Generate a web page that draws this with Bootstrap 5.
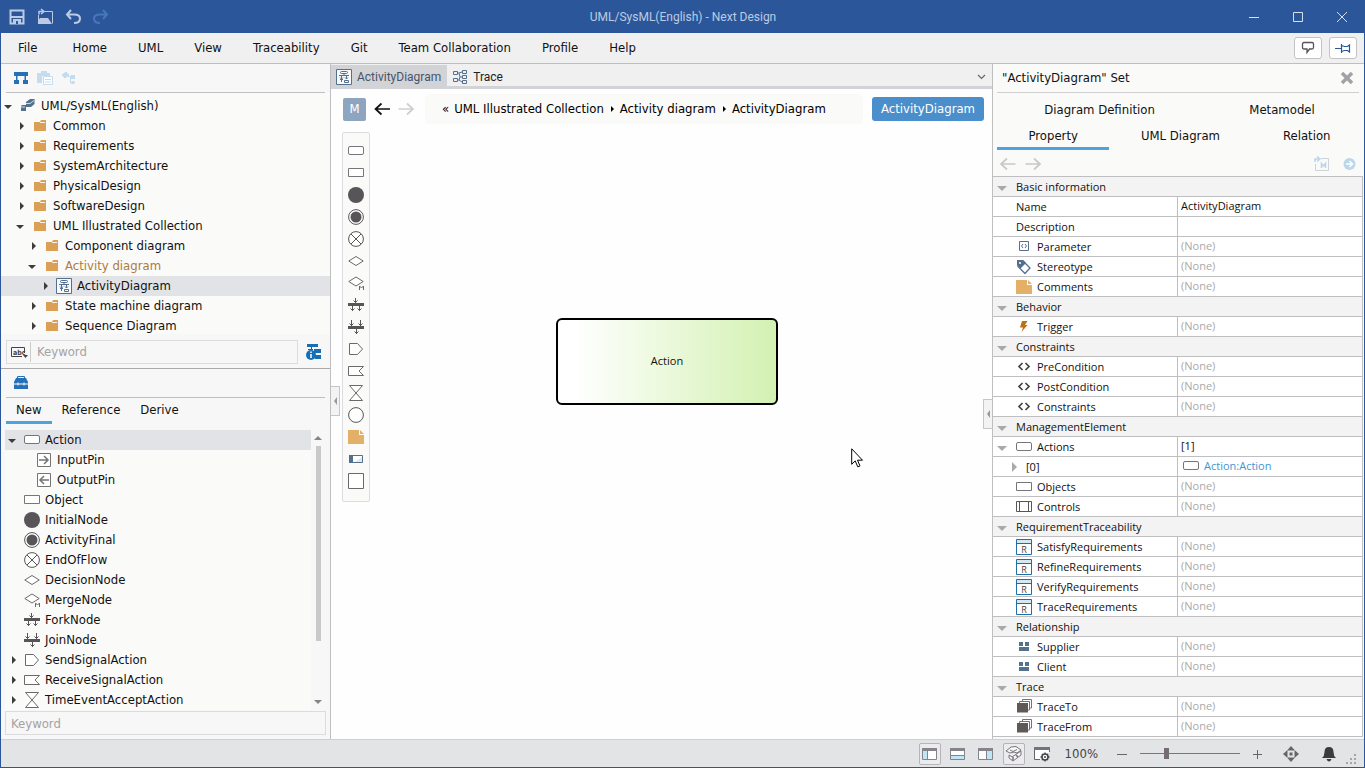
<!DOCTYPE html>
<html lang="en">
<head>
<meta charset="utf-8">
<meta name="viewport" content="width=device-width, initial-scale=1">
<title>UML/SysML(English) - Next Design</title>
<link href="https://cdn.jsdelivr.net/npm/bootstrap@5.3.0/dist/css/bootstrap.min.css" rel="stylesheet">
<style>
:root{--brand:#2b579a;--line:#bfbfc1;--sel:#e2e3e6;--paper:#fafaf8;--accent:#4fa3dc;--ink:#575557}
body{font:13px/20px "DejaVu Sans Condensed","DejaVu Sans",sans-serif;color:#111;background:#fefefe}
.app{height:100vh;border:1px solid var(--brand);border-top:0}
.app main{min-height:0}
svg{display:block;flex:none}
button,.crumb-link{font:inherit;color:inherit;background:none;border:0;padding:0;text-decoration:none}
input{font:inherit}
.titlebar{background:var(--brand);height:33px;color:#bccbe3;padding:0 14px 0 7px}
.titlebar .caption-text{font:12px/20px Roboto,sans-serif;padding-left:8px}
.titlebar .side{flex:1 1 0}
.quick{gap:10px}
.window-btns{gap:28px}
.menubar{background:#f0f0f0;height:31px;border-bottom:1px solid var(--line);padding:0 7px 0 17px}
.menus{gap:31px}
.menus button:first-child{margin-right:4px}
.chips{gap:7px}
.chip{width:28px;height:22px;border:1px solid #c3c3c5;border-radius:3px;background:#fff}
.left-pane{width:330px;border-right:1px solid var(--line);background:#f7f7f7}
.tool-row{height:29px;margin:0 5px;border-bottom:1px solid var(--line);padding-left:7px;gap:8px}
.tree{list-style:none;margin:0;padding:0;background:var(--paper)}
.model-tree{padding-top:3px}
.tree li{display:flex;align-items:center;height:20px;gap:5px;white-space:nowrap}
.tree li>.arrow{margin-right:-2px;width:16px}
.l1{padding-left:12px}.l2{padding-left:24px}.l3{padding-left:36px}
.tree .open-path{color:#b07a3c}
.tree .picked{background:var(--sel)}
.find-row{height:34px;padding:6px 8px 4px 5px;gap:7px}
.find-box{border:1px solid #dcdcde;background:#f7f7f7;height:24px}
.find-box input,input.find-box{min-width:0;border-radius:0;outline:0}
.find-box input{border:0;border-left:1px solid #ccc;background:none;padding:0 6px}
input.find-box{padding:0 5px;margin:0 4px 4px}
input::placeholder{color:#a3a3a3}
.lower{border-top:1px solid #a9a9ab;background:#f7f7f7}
.new-tabs{padding:0 5px;height:26px}
.new-tabs button{padding:0 10px;border-bottom:3px solid transparent}
.new-tabs .active,.prop-tabs .active{border-bottom-color:var(--accent)}
.new-list{margin:6px 5px 1px 4px}
.scroller{width:14px;background:#f7f7f7}
.scroller .bar{width:5px;background:#c9c9c9;flex:0 1 195px}
.center-pane{min-width:0;background:#fefefe}
.doc-tabs{height:25px;padding-top:1px;background:#f0f0f0;border-bottom:3px solid #d2d3d7}
.doc-tabs button{gap:5px;padding:2px 6px 0 5px;font:12px/16px Roboto,sans-serif;color:#222}
.doc-tabs .active{background:#d2d3d7;color:#48536a}
.crumb-row{padding:5px 8px 0 12px;height:35px}
.model-btn{width:23px;height:23px;background:#8ea5c0;color:#fff;border-radius:2px}
.go-back{color:#111}
.go-fwd{color:#cfcfcf}
.crumbs{background:var(--paper);border-radius:4px;height:30px;margin:0 9px 0 10px;padding-left:17px;color:#000;gap:5px}
.type-btn{height:24px;background:#4a8fcc;color:#fff;border-radius:3px;padding:0 9px}
.canvas{position:relative}
.palette{width:28px;border:1px solid #dcdce0;border-radius:2px;background:var(--paper);margin:8px 0 0 11px;padding:7px 0 9px}
.palette button{height:22px;display:flex;align-items:center}
.node-action{position:absolute;left:225px;top:194px;width:222px;height:87px;border:2px solid #000;border-radius:6px;background:linear-gradient(90deg,#fff 8%,#d3f1b2);font:11px/16px "Open Sans",sans-serif;padding-bottom:2px}
.pointer{position:absolute;left:520px;top:324px}
.grip{position:absolute;width:9px;height:30px;background:#f3f3f3;border:1px solid #c6c6c8;padding-left:1px}
.grip-l{left:0;top:262px;border-left:0}
.grip-r{right:0;top:275px;border-right:0}
.right-pane{width:372px;border-left:1px solid var(--line);background:var(--paper)}
.pane-head{height:29px;margin:0 5px 0 4px;border-bottom:1px solid #cfcfd1;padding:0 5px}
.prop-tabs{margin:0 2px 0 4px;padding-top:5px}
.prop-tabs button{flex:1 1 auto;height:26px;border-bottom:3px solid transparent}
.nav-row{height:26px;padding:2px 8px 0 6px;gap:9px;color:#c9c9cb}
.props{width:370px;font:11px/17px "Open Sans","Noto Sans",sans-serif;border-collapse:separate;border-spacing:0;table-layout:fixed;border-top:1px solid var(--line);border-right:1px solid var(--line);background:#fff}
.props .name-col{width:184px}
.props th,.props td{height:20px;padding:0;border-bottom:1px solid var(--line);font-weight:400;white-space:nowrap}
.props .cell{display:flex;align-items:center;height:19px;gap:5px;padding-left:23px}
.props .group th{background:#f3f3f3}
.props .group .cell,.props .opened .cell{padding-left:2px}
.props .item .cell{padding-left:18px}
.props td{border-left:1px solid var(--line);padding:0 0 2px 3px;color:#a9a9a9}
.props td.val{color:#111}
.props a{color:#3f95d2;text-decoration:none}
.ref-link{gap:5px;padding-left:2px}
.status{height:28px;background:#e3e4e6;border-top:1px solid #d0d0d3}
.status .tool{width:22px;height:22px;margin:0 3px;border:1px solid transparent;border-radius:2px}
.status .on{border-color:#b7b3b9;background:#ececee}
.zoom-value{margin:0 16px 0 9px;color:#444}
.zoom-range{appearance:none;width:100px;height:14px;margin:0 10px;background:linear-gradient(#7b757b,#7b757b) center/100% 1px no-repeat}
.zoom-range::-webkit-slider-thumb{appearance:none;width:5px;height:11px;background:#756d73}
.fit-btn{margin:0 22px 0 17px}
.bell-btn{margin-right:9px}
</style>
</head>
<body>
<svg width="0" height="0" class="position-absolute" aria-hidden="true">
<defs>
<symbol id="right" viewBox="0 0 16 16"><path d="M7 4v8l4-4z" fill="#3c3c3c"/></symbol>
<symbol id="down" viewBox="0 0 16 16"><path d="M3 7h8l-4 4z" fill="#3c3c3c"/></symbol>
<symbol id="gdown" viewBox="0 0 16 16"><path d="M2 7h10l-5 5z" fill="#a9a9ab"/></symbol>
<symbol id="folder" viewBox="0 0 16 16"><path d="M2 4h6l1-2h5v11H2z" fill="#dba056"/><path d="M8 4.500h5" stroke="#fff3df"/></symbol>
<symbol id="action" viewBox="0 0 16 16"><rect x=".5" y="3.500" width="15" height="8" rx="1.500" fill="#fff" stroke="#77757a"/></symbol>
<symbol id="object" viewBox="0 0 16 16"><path d="M.5 3.500h15v8H.5z" fill="#fff" stroke="#77757a"/></symbol>
<symbol id="inpin" viewBox="0 0 16 16"><path d="M1.500 1.500h13v13h-13z" fill="#fff" stroke="#757375"/><path d="M3 8h9M8 4l4 4-4 4" fill="none" stroke="#757375" stroke-width="1.500"/></symbol>
<symbol id="outpin" viewBox="0 0 16 16"><path d="M1.500 1.500h13v13h-13z" fill="#fff" stroke="#757375"/><path d="M13 8H4M8 4L4 8l4 4" fill="none" stroke="#757375" stroke-width="1.500"/></symbol>
<symbol id="initial" viewBox="0 0 16 16"><circle cx="8" cy="8" r="8" fill="#575557"/></symbol>
<symbol id="final" viewBox="0 0 16 16"><circle cx="8" cy="8" r="7.400" fill="#fff" stroke="#575557"/><circle cx="8" cy="8" r="5.500" fill="#575557"/></symbol>
<symbol id="endflow" viewBox="0 0 16 16"><circle cx="8" cy="8" r="7.400" fill="#fff" stroke="#575557"/><path d="M3 3l10 10M13 3L3 13" stroke="#575557"/></symbol>
<symbol id="decision" viewBox="0 0 16 16"><path d="M.8 8L8 3.500 15.200 8 8 12.500z" fill="#fff" stroke="#6b696b"/></symbol>
<symbol id="merge" viewBox="0 0 16 16"><path d="M.8 6.500L8 2l7.200 4.500L8 11z" fill="#fff" stroke="#6b696b"/><path d="M11.500 15v-4l2 2 2-2v4" fill="none" stroke="#6b696b"/></symbol>
<symbol id="fork" viewBox="0 0 16 16"><path d="M0 6h16v3H0z" fill="#575557"/><path d="M7.500 1v5M5.500 3.500l2 2 2-2M4.500 9v5M2.500 11.500l2 2 2-2M11.500 9v5M9.500 11.500l2 2 2-2" fill="none" stroke="#575557"/></symbol>
<symbol id="join" viewBox="0 0 16 16"><path d="M0 7h16v3H0z" fill="#575557"/><path d="M3.500 1v6M1.500 4.500l2 2 2-2M12.500 1v6M10.500 4.500l2 2 2-2M8.500 10v5M6.500 12.500l2 2 2-2" fill="none" stroke="#575557"/></symbol>
<symbol id="send" viewBox="0 0 16 16"><path d="M1.500 2.500h8l5 5.500-5 5.500h-8z" fill="#fff" stroke="#6b696b"/></symbol>
<symbol id="receive" viewBox="0 0 16 16"><path d="M.5 3.500h15L11 8l4.500 4.500H.5z" fill="#fff" stroke="#6b696b"/></symbol>
<symbol id="time" viewBox="0 0 16 16"><path d="M1.500 .5h13L1.500 15.500h13z" fill="#fff" stroke="#6b696b"/></symbol>
<symbol id="ring" viewBox="0 0 16 16"><circle cx="8" cy="8" r="7.400" fill="#fff" stroke="#575557"/></symbol>
<symbol id="note" viewBox="0 0 16 16"><path d="M0 1h11v5h5v9H0z" fill="#e4b067"/><path d="M12 1l4 4h-4z" fill="#e4b067"/></symbol>
<symbol id="part" viewBox="0 0 16 16"><path d="M1.500 4.500h13v7h-13z" fill="#fff" stroke="#54708f"/><path d="M1 4h4v8H1z" fill="#54708f"/><path d="M7 11l7-5v5z" fill="#e3e6ea"/></symbol>
<symbol id="square" viewBox="0 0 16 16"><path d="M.5 .5h15v15H.5z" fill="#fff" stroke="#6b696b"/></symbol>
<symbol id="control" viewBox="0 0 16 16"><path d="M.5 2.500h15v10H.5zM3.500 2v10M12.500 2v10" fill="#fff" stroke="#575557"/></symbol>
<symbol id="diagram" viewBox="0 0 16 16"><g fill="none" stroke="#54708f"><path d="M.5 .5h15v15H.5z" fill="#f7f8fa"/><rect x="4.500" y="2.500" width="7" height="2" rx="1"/><path d="M8 4.500v2M3 6.500h10M5.500 7v6M4 10.500h3M4 8.500l1.500 1.500L7 8.500M10.500 7v3M9 8.500l1.500 1.500L12 8.500M8.500 11.500h4v2h-4z"/></g></symbol>
<symbol id="trace" viewBox="0 0 16 16"><g fill="none" stroke="#54708f"><path d="M1.500 2.500h4v3h-4zM1.500 9.500h4v3h-4zM10.500 1.500h4v3h-4zM10.500 6.500h4v3h-4zM10.500 11.500h4v3h-4zM6 4h1l1 4-1 3H6M8 8h2M7 4l3-1M7 11l3 2"/></g></symbol>
<symbol id="param" viewBox="0 0 16 16"><path d="M3.500 2.500h9v9h-9z" fill="#fff" stroke="#54708f"/><path d="M7 5L5.500 7 7 9M9 5l1.500 2L9 9" fill="none" stroke="#54708f"/></symbol>
<symbol id="tag" viewBox="0 0 16 16"><path d="M2 2h5l7 7-5 5.500-7-7z" fill="#fff" stroke="#54708f" stroke-width="1.300"/><path d="M1 1h6l3 3-5.500 5.500L1 6z" fill="#54708f"/><circle cx="4" cy="4" r="1" fill="#fff"/></symbol>
<symbol id="bolt" viewBox="0 0 16 16"><path d="M6 2h5.500L9 6h2.500L5.500 13 7 8.500H4z" fill="#bf7014"/></symbol>
<symbol id="angle" viewBox="0 0 16 16"><path d="M6.500 4L3 7.500 6.500 11M9.500 4L13 7.500 9.500 11" fill="none" stroke="#444" stroke-width="1.700"/></symbol>
<symbol id="req" viewBox="0 0 16 16"><path d="M.5 .5h15v15H.5z" fill="#fff" stroke="#1d6fa5"/><path d="M1 1h14v3H1z" fill="#d4e9f2"/><path d="M1 4.500h14" stroke="#1d6fa5"/><text x="8" y="13.500" font-size="9" text-anchor="middle" fill="#444">R</text></symbol>
<symbol id="rel" viewBox="0 0 16 16"><path d="M3 3h4v4H3zM9 3h4v4H9zM3 8h10v4H3z" fill="#54708f"/></symbol>
<symbol id="stack" viewBox="0 0 16 16"><path d="M3.500 4V2.500h10V11H12M6.500 2V.5h9V9H14" fill="none" stroke="#77716f"/><path d="M1 4h11v9.500H1z" fill="#5f5957"/></symbol>
<symbol id="back" viewBox="0 0 16 16"><path d="M16 8H1M7.500 2.500L1.500 8l6 5.500" fill="none" stroke="currentColor" stroke-width="1.700"/></symbol>
<symbol id="fwd" viewBox="0 0 16 16"><path d="M0 8h15M8.500 2.500l6 5.500-6 5.500" fill="none" stroke="currentColor" stroke-width="1.700"/></symbol>
</defs>
</svg>

<div class="app d-flex flex-column overflow-hidden">
<header class="titlebar d-flex align-items-center flex-shrink-0">
  <div class="side quick d-flex align-items-center">
    <button aria-label="Save"><svg width="18" height="18" viewBox="0 0 18 18"><path d="M2.500 2.500h13v13h-13z" fill="none" stroke="#bccbe3" stroke-width="2"/><path d="M2 8h14v2H2zM5 11h8v5H5z" fill="#bccbe3"/><path d="M8 13h2v3H8z" fill="#2b579a"/></svg></button>
    <button aria-label="Open"><svg width="18" height="18" viewBox="0 0 18 18"><path d="M8 3.500h8.500v12M2.500 15V7" fill="none" stroke="#bccbe3"/><path d="M2 16v-3l2-3h8l4 6z" fill="#bccbe3"/><path d="M3 6.500V3.500h4M5 1l3 2.500L5 6" fill="none" stroke="#bccbe3" stroke-width="1.500"/></svg></button>
    <button aria-label="Undo"><svg width="18" height="18" viewBox="0 0 18 18"><path d="M7 2L3 6.500 7 11M3 6.500h7c4 0 6 1.500 6 4 0 3-2 4.500-6 4.500" fill="none" stroke="#bccbe3" stroke-width="2"/></svg></button>
    <button aria-label="Redo"><svg width="18" height="18" viewBox="0 0 18 18"><path d="M11 2l4 4.500-4 4.500M15 6.500H8c-4 0-6 1.500-6 4C2 13.500 4 15 8 15" fill="none" stroke="#4677b9" stroke-width="2"/></svg></button>
  </div>
  <div class="caption-text">UML/SysML(English) - Next Design</div>
  <div class="side window-btns d-flex justify-content-end align-items-center">
    <button aria-label="Minimize"><svg width="16" height="16"><path d="M3 8.500h10" stroke="#d7e0ee"/></svg></button>
    <button aria-label="Maximize"><svg width="16" height="16"><path d="M3.500 3.500h9v9h-9z" fill="none" stroke="#d7e0ee"/></svg></button>
    <button aria-label="Close"><svg width="16" height="16"><path d="M3 3l10 10M13 3L3 13" stroke="#d7e0ee"/></svg></button>
  </div>
</header>
<nav class="menubar d-flex align-items-center justify-content-between flex-shrink-0">
  <div class="menus d-flex"><button>File</button><button>Home</button><button>UML</button><button>View</button><button>Traceability</button><button>Git</button><button>Team Collaboration</button><button>Profile</button><button>Help</button></div>
  <div class="chips d-flex">
    <button class="chip d-flex align-items-center justify-content-center" aria-label="Feedback"><svg width="16" height="16" fill="none" stroke="#575557" stroke-width="1.300"><path d="M4 2.500h8q1.500 0 1.500 1.500v3.500Q13.500 9 12 9h-2.500L7 12.500V9H4Q2.500 9 2.500 7.500V4q0-1.500 1.500-1.500z"/></svg></button>
    <button class="chip d-flex align-items-center justify-content-center" aria-label="Pin ribbon"><svg width="16" height="16" fill="none" stroke="#2b579a" stroke-width="1.200"><path d="M0 8.500h6M6.500 4v9M6.500 5.500l3 1h3l2-1.500v7l-2-1.500h-3l-3 1"/></svg></button>
  </div>
</nav>

<main class="d-flex flex-grow-1">
<aside class="left-pane d-flex flex-column flex-shrink-0">
  <div class="tool-row d-flex align-items-center flex-shrink-0">
    <button aria-label="Model tree"><svg width="16" height="16" fill="#2471b8"><path d="M1 2h14v4H1zM1 10h5v4H1zM10 10h5v4h-5z"/><path d="M3 6h1.500v4H3zM11.500 6H13v4h-1.500z"/></svg></button>
    <button aria-label="Views"><svg width="16" height="16"><path d="M0 3h4V1h6v2h3v3H5v7H0z" fill="#c5dcef"/><path d="M6.500 6.500h9v8h-9z" fill="#fff" stroke="#c5dcef"/><path d="M8 9.500h6M8 12h6" stroke="#c5dcef"/></svg></button>
    <button aria-label="Products"><svg width="16" height="16"><path d="M1 5l4-3 3 3-4 3z" fill="#c5dcef" stroke="#c5dcef"/><path d="M7 6.500h4M9.500 7v6H11" fill="none" stroke="#c5dcef"/><path d="M10 5h4v4h-4zM10.500 11h3v3h-3z" fill="#c5dcef"/></svg></button>
  </div>
  <ul class="tree model-tree flex-grow-1 overflow-hidden" role="tree">
    <li role="treeitem"><svg class="arrow" width="16" height="16"><use href="#down"/></svg><svg width="16" height="16"><path d="M6 4l4-3h4.500v5L11 9H6z" fill="#54708f"/><path d="M6 5.500h4l4-3" stroke="#d5dce4" fill="none"/><path d="M1 8l1-1h4v6H1z" fill="#54708f"/><path d="M1 9h4" stroke="#d5dce4"/></svg><span>UML/SysML(English)</span></li>
    <li class="l1" role="treeitem"><svg class="arrow" width="16" height="16"><use href="#right"/></svg><svg width="16" height="16"><use href="#folder"/></svg><span>Common</span></li>
    <li class="l1" role="treeitem"><svg class="arrow" width="16" height="16"><use href="#right"/></svg><svg width="16" height="16"><use href="#folder"/></svg><span>Requirements</span></li>
    <li class="l1" role="treeitem"><svg class="arrow" width="16" height="16"><use href="#right"/></svg><svg width="16" height="16"><use href="#folder"/></svg><span>SystemArchitecture</span></li>
    <li class="l1" role="treeitem"><svg class="arrow" width="16" height="16"><use href="#right"/></svg><svg width="16" height="16"><use href="#folder"/></svg><span>PhysicalDesign</span></li>
    <li class="l1" role="treeitem"><svg class="arrow" width="16" height="16"><use href="#right"/></svg><svg width="16" height="16"><use href="#folder"/></svg><span>SoftwareDesign</span></li>
    <li class="l1" role="treeitem"><svg class="arrow" width="16" height="16"><use href="#down"/></svg><svg width="16" height="16"><use href="#folder"/></svg><span>UML Illustrated Collection</span></li>
    <li class="l2" role="treeitem"><svg class="arrow" width="16" height="16"><use href="#right"/></svg><svg width="16" height="16"><use href="#folder"/></svg><span>Component diagram</span></li>
    <li class="l2 open-path" role="treeitem"><svg class="arrow" width="16" height="16"><use href="#down"/></svg><svg width="16" height="16"><use href="#folder"/></svg><span>Activity diagram</span></li>
    <li class="l3 picked" role="treeitem"><svg class="arrow" width="16" height="16"><use href="#right"/></svg><svg width="16" height="16"><use href="#diagram"/></svg><span>ActivityDiagram</span></li>
    <li class="l2" role="treeitem"><svg class="arrow" width="16" height="16"><use href="#right"/></svg><svg width="16" height="16"><use href="#folder"/></svg><span>State machine diagram</span></li>
    <li class="l2" role="treeitem"><svg class="arrow" width="16" height="16"><use href="#right"/></svg><svg width="16" height="16"><use href="#folder"/></svg><span>Sequence Diagram</span></li>
  </ul>
  <div class="find-row d-flex align-items-center flex-shrink-0">
    <div class="find-box d-flex align-items-center flex-grow-1">
      <button aria-label="Search mode" class="ps-1"><svg width="19" height="16"><path d="M13.500 9V3.500H.5v9H11" fill="none" stroke="#444"/><text x="2" y="10.500" font-size="7" font-weight="700" fill="#444">abc</text><path d="M12 11h5l-2.500 3z" fill="#444"/></svg></button>
      <input class="flex-grow-1" type="text" placeholder="Keyword" aria-label="Search the model">
    </div>
    <button aria-label="Tree options"><svg width="17" height="18"><path d="M2 1h11v3H2zM9 6h7v4H9zM10 12h6v4h-6z" fill="#146fb8"/><path d="M6.500 4v2M3 6.500h5" stroke="#555"/><circle cx="6" cy="12" r="5" fill="#146fb8"/><path d="M6 8.500v1.500M6 11v4" stroke="#fff" stroke-width="1.500"/></svg></button>
  </div>
  <section class="lower d-flex flex-column flex-shrink-0">
    <div class="tool-row d-flex align-items-center"><button aria-label="Toolbox"><svg width="16" height="16"><path d="M4.500 4V2q0-.5 1-.5h5q1 0 1 .5v2" fill="none" stroke="#2471b8" stroke-width="1.200"/><path d="M3 3h10l2 4v7H1V7z" fill="#2471b8"/><path d="M1 9h14M5 7.500v3M11 7.500v3" stroke="#fff"/></svg></button></div>
    <div class="new-tabs d-flex" role="tablist"><button class="active" role="tab">New</button><button role="tab">Reference</button><button role="tab">Derive</button></div>
    <div class="new-list d-flex">
      <ul class="tree flex-grow-1" role="tree">
        <li class="picked" role="treeitem"><svg class="arrow" width="16" height="16"><use href="#down"/></svg><svg width="16" height="16"><use href="#action"/></svg><span>Action</span></li>
        <li class="l1" role="treeitem"><span class="arrow"></span><svg width="16" height="16"><use href="#inpin"/></svg><span>InputPin</span></li>
        <li class="l1" role="treeitem"><span class="arrow"></span><svg width="16" height="16"><use href="#outpin"/></svg><span>OutputPin</span></li>
        <li role="treeitem"><span class="arrow"></span><svg width="16" height="16"><use href="#object"/></svg><span>Object</span></li>
        <li role="treeitem"><span class="arrow"></span><svg width="16" height="16"><use href="#initial"/></svg><span>InitialNode</span></li>
        <li role="treeitem"><span class="arrow"></span><svg width="16" height="16"><use href="#final"/></svg><span>ActivityFinal</span></li>
        <li role="treeitem"><span class="arrow"></span><svg width="16" height="16"><use href="#endflow"/></svg><span>EndOfFlow</span></li>
        <li role="treeitem"><span class="arrow"></span><svg width="16" height="16"><use href="#decision"/></svg><span>DecisionNode</span></li>
        <li role="treeitem"><span class="arrow"></span><svg width="16" height="16"><use href="#merge"/></svg><span>MergeNode</span></li>
        <li role="treeitem"><span class="arrow"></span><svg width="16" height="16"><use href="#fork"/></svg><span>ForkNode</span></li>
        <li role="treeitem"><span class="arrow"></span><svg width="16" height="16"><use href="#join"/></svg><span>JoinNode</span></li>
        <li role="treeitem"><svg class="arrow" width="16" height="16"><use href="#right"/></svg><svg width="16" height="16"><use href="#send"/></svg><span>SendSignalAction</span></li>
        <li role="treeitem"><svg class="arrow" width="16" height="16"><use href="#right"/></svg><svg width="16" height="16"><use href="#receive"/></svg><span>ReceiveSignalAction</span></li>
        <li role="treeitem"><svg class="arrow" width="16" height="16"><use href="#right"/></svg><svg width="16" height="16"><use href="#time"/></svg><span>TimeEventAcceptAction</span></li>
      </ul>
      <div class="scroller d-flex flex-column align-items-center justify-content-between">
        <svg width="8" height="16"><path d="M0 10h8l-4-4z" fill="#858585"/></svg>
        <div class="bar"></div><div class="flex-grow-1"></div>
        <svg width="8" height="16"><path d="M0 6h8l-4 4z" fill="#858585"/></svg>
      </div>
    </div>
    <input class="find-box" type="text" placeholder="Keyword" aria-label="Search the toolbox">
  </section>
</aside>

<section class="center-pane d-flex flex-column flex-grow-1">
  <div class="doc-tabs d-flex align-items-stretch flex-shrink-0" role="tablist">
    <button class="active d-flex align-items-center" role="tab"><svg width="16" height="16"><use href="#diagram"/></svg>ActivityDiagram</button>
    <button class="d-flex align-items-center" role="tab"><svg width="16" height="16"><use href="#trace"/></svg>Trace</button>
    <button class="ms-auto" aria-label="Tab list"><svg width="9" height="10"><path d="M1 3l3.500 3.500L8 3" fill="none" stroke="#666" stroke-width="1.200"/></svg></button>
  </div>
  <div class="crumb-row d-flex align-items-center flex-shrink-0">
    <button class="model-btn">M</button>
    <button class="go-back ms-2" aria-label="Back"><svg width="16" height="16"><use href="#back"/></svg></button>
    <button class="go-fwd ms-2" aria-label="Forward"><svg width="17" height="16"><use href="#fwd"/></svg></button>
    <nav class="crumbs d-flex align-items-center flex-grow-1 text-nowrap" aria-label="Location"><span>«</span><a class="crumb-link" href="#">UML Illustrated Collection</a><svg width="6" height="8"><path d="M2 1v6l3-3z"/></svg><a class="crumb-link" href="#">Activity diagram</a><svg width="6" height="8"><path d="M2 1v6l3-3z"/></svg><a class="crumb-link" href="#">ActivityDiagram</a></nav>
    <button class="type-btn">ActivityDiagram</button>
  </div>
  <div class="canvas flex-grow-1">
    <div class="palette d-flex flex-column align-items-center">
      <button aria-label="Action"><svg width="16" height="16"><use href="#action"/></svg></button>
      <button aria-label="Object"><svg width="16" height="16"><use href="#object"/></svg></button>
      <button aria-label="InitialNode"><svg width="16" height="16"><use href="#initial"/></svg></button>
      <button aria-label="ActivityFinal"><svg width="16" height="16"><use href="#final"/></svg></button>
      <button aria-label="EndOfFlow"><svg width="16" height="16"><use href="#endflow"/></svg></button>
      <button aria-label="DecisionNode"><svg width="16" height="16"><use href="#decision"/></svg></button>
      <button aria-label="MergeNode"><svg width="16" height="16"><use href="#merge"/></svg></button>
      <button aria-label="ForkNode"><svg width="16" height="16"><use href="#fork"/></svg></button>
      <button aria-label="JoinNode"><svg width="16" height="16"><use href="#join"/></svg></button>
      <button aria-label="SendSignalAction"><svg width="16" height="16"><use href="#send"/></svg></button>
      <button aria-label="ReceiveSignalAction"><svg width="16" height="16"><use href="#receive"/></svg></button>
      <button aria-label="TimeEventAcceptAction"><svg width="16" height="16"><use href="#time"/></svg></button>
      <button aria-label="Connector"><svg width="16" height="16"><use href="#ring"/></svg></button>
      <button aria-label="Note"><svg width="16" height="16"><use href="#note"/></svg></button>
      <button aria-label="Partition"><svg width="16" height="16"><use href="#part"/></svg></button>
      <button aria-label="Region"><svg width="16" height="16"><use href="#square"/></svg></button>
    </div>
    <div class="node-action d-flex align-items-center justify-content-center">Action</div>
    <svg class="pointer" width="13" height="21" viewBox="0 0 13 21"><path d="M.7 .8v15.500l3.500-3.400 2.600 6 2.200-1-2.500-5.700h5z" fill="#fff" stroke="#000"/></svg>
    <button class="grip grip-l" aria-label="Collapse left pane"><svg width="6" height="10"><path d="M5 1v8L2 5z" fill="#999"/></svg></button>
    <button class="grip grip-r" aria-label="Collapse right pane"><svg width="6" height="10"><path d="M5 1v8L2 5z" fill="#999"/></svg></button>
  </div>
</section>

<aside class="right-pane d-flex flex-column flex-shrink-0">
  <div class="pane-head d-flex align-items-center justify-content-between flex-shrink-0"><span>"ActivityDiagram" Set</span><button aria-label="Close pane"><svg width="14" height="14"><path d="M2 2l10 10M12 2L2 12" stroke="#a3a1a5" stroke-width="3.500"/></svg></button></div>
  <div class="prop-tabs" role="tablist">
    <div class="d-flex"><button role="tab">Diagram Definition</button><button role="tab">Metamodel</button></div>
    <div class="d-flex"><button role="tab" class="active">Property</button><button role="tab">UML Diagram</button><button role="tab">Relation</button></div>
  </div>
  <div class="nav-row d-flex align-items-center flex-shrink-0">
    <button aria-label="Previous"><svg width="17" height="16"><use href="#back"/></svg></button>
    <button aria-label="Next"><svg width="17" height="16"><use href="#fwd"/></svg></button>
    <button class="ms-auto" aria-label="Open metamodel"><svg width="16" height="16"><path d="M7 2.500h7.500v12h-13V8" fill="none" stroke="#cdd3d9"/><path d="M7.500 12V7.500l2 2.500 2-2.500V12" fill="none" stroke="#bad7ee" stroke-width="1.600"/><path d="M1 6V3h4M3 .5L6 3 3 5.500" fill="none" stroke="#bad7ee" stroke-width="1.500"/></svg></button>
    <button class="ms-1" aria-label="Go"><svg width="13" height="14"><circle cx="6.500" cy="7" r="6" fill="#bad7ee"/><path d="M3 7h6M6.500 4l3 3-3 3" fill="none" stroke="#fff" stroke-width="1.500"/></svg></button>
  </div>
  <table class="props">
    <colgroup><col class="name-col"><col></colgroup>
    <tbody>
    <tr class="group"><th colspan="2"><div class="cell"><svg width="16" height="16"><use href="#gdown"/></svg>Basic information</div></th></tr>
    <tr><th><div class="cell">Name</div></th><td class="val">ActivityDiagram</td></tr>
    <tr><th><div class="cell">Description</div></th><td></td></tr>
    <tr><th><div class="cell"><svg width="16" height="16"><use href="#param"/></svg>Parameter</div></th><td>(None)</td></tr>
    <tr><th><div class="cell"><svg width="16" height="16"><use href="#tag"/></svg>Stereotype</div></th><td>(None)</td></tr>
    <tr><th><div class="cell"><svg width="16" height="16"><use href="#note"/></svg>Comments</div></th><td>(None)</td></tr>
    <tr class="group"><th colspan="2"><div class="cell"><svg width="16" height="16"><use href="#gdown"/></svg>Behavior</div></th></tr>
    <tr><th><div class="cell"><svg width="16" height="16"><use href="#bolt"/></svg>Trigger</div></th><td>(None)</td></tr>
    <tr class="group"><th colspan="2"><div class="cell"><svg width="16" height="16"><use href="#gdown"/></svg>Constraints</div></th></tr>
    <tr><th><div class="cell"><svg width="16" height="16"><use href="#angle"/></svg>PreCondition</div></th><td>(None)</td></tr>
    <tr><th><div class="cell"><svg width="16" height="16"><use href="#angle"/></svg>PostCondition</div></th><td>(None)</td></tr>
    <tr><th><div class="cell"><svg width="16" height="16"><use href="#angle"/></svg>Constraints</div></th><td>(None)</td></tr>
    <tr class="group"><th colspan="2"><div class="cell"><svg width="16" height="16"><use href="#gdown"/></svg>ManagementElement</div></th></tr>
    <tr class="opened"><th><div class="cell"><svg width="16" height="16"><use href="#gdown"/></svg><svg width="16" height="16"><use href="#action"/></svg>Actions</div></th><td class="val">[1]</td></tr>
    <tr class="item"><th><div class="cell"><svg width="10" height="16"><path d="M1 3v10l5-5z" fill="#a9a9ab"/></svg>[0]</div></th><td><div class="ref-link d-flex align-items-center"><svg width="16" height="16"><use href="#action"/></svg><a href="#">Action:Action</a></div></td></tr>
    <tr><th><div class="cell"><svg width="16" height="16"><use href="#object"/></svg>Objects</div></th><td>(None)</td></tr>
    <tr><th><div class="cell"><svg width="16" height="16"><use href="#control"/></svg>Controls</div></th><td>(None)</td></tr>
    <tr class="group"><th colspan="2"><div class="cell"><svg width="16" height="16"><use href="#gdown"/></svg>RequirementTraceability</div></th></tr>
    <tr><th><div class="cell"><svg width="16" height="16"><use href="#req"/></svg>SatisfyRequirements</div></th><td>(None)</td></tr>
    <tr><th><div class="cell"><svg width="16" height="16"><use href="#req"/></svg>RefineRequirements</div></th><td>(None)</td></tr>
    <tr><th><div class="cell"><svg width="16" height="16"><use href="#req"/></svg>VerifyRequirements</div></th><td>(None)</td></tr>
    <tr><th><div class="cell"><svg width="16" height="16"><use href="#req"/></svg>TraceRequirements</div></th><td>(None)</td></tr>
    <tr class="group"><th colspan="2"><div class="cell"><svg width="16" height="16"><use href="#gdown"/></svg>Relationship</div></th></tr>
    <tr><th><div class="cell"><svg width="16" height="16"><use href="#rel"/></svg>Supplier</div></th><td>(None)</td></tr>
    <tr><th><div class="cell"><svg width="16" height="16"><use href="#rel"/></svg>Client</div></th><td>(None)</td></tr>
    <tr class="group"><th colspan="2"><div class="cell"><svg width="16" height="16"><use href="#gdown"/></svg>Trace</div></th></tr>
    <tr><th><div class="cell"><svg width="16" height="16"><use href="#stack"/></svg>TraceTo</div></th><td>(None)</td></tr>
    <tr><th><div class="cell"><svg width="16" height="16"><use href="#stack"/></svg>TraceFrom</div></th><td>(None)</td></tr>
    </tbody>
  </table>
</aside>
</main>

<footer class="status d-flex align-items-center justify-content-end flex-shrink-0">
  <button class="tool on d-flex align-items-center justify-content-center" aria-label="Left pane"><svg width="16" height="16"><path d="M.5 2.500h14v11H.5z" fill="#fff" stroke="#87838a"/><path d="M0 2h15v3H0z" fill="#87838a"/><path d="M1 5h4v8H1z" fill="#bfe6f5"/><path d="M5.500 5v8" stroke="#87838a"/></svg></button>
  <button class="tool d-flex align-items-center justify-content-center" aria-label="Bottom pane"><svg width="16" height="16"><path d="M.5 2.500h14v11H.5z" fill="#fff" stroke="#87838a"/><path d="M0 2h15v3H0z" fill="#87838a"/><path d="M1 10h13v3H1z" fill="#bfe6f5"/><path d="M1 9.500h13" stroke="#87838a"/></svg></button>
  <button class="tool d-flex align-items-center justify-content-center" aria-label="Right pane"><svg width="16" height="16"><path d="M.5 2.500h14v11H.5z" fill="#fff" stroke="#87838a"/><path d="M0 2h15v3H0z" fill="#87838a"/><path d="M9 5h5v8H9z" fill="#bfe6f5"/><path d="M8.500 5v8" stroke="#87838a"/></svg></button>
  <button class="tool on d-flex align-items-center justify-content-center" aria-label="Shapes"><svg width="18" height="18" fill="#f6f6f7" stroke="#77737a"><path d="M1 6l5-4 5-.5L16 5l-4 3-3-1-4 1z"/><path d="M5 5l3 1.500 4-2M4 10l3 2 9-6v4l-8 6-4-3z"/><path d="M8 12v3M11 10l2 2" stroke-width="1.500"/></svg></button>
  <button class="tool d-flex align-items-center justify-content-center" aria-label="View settings"><svg width="18" height="18"><path d="M7 14.500H1.500v-12h15V7" fill="#fff" stroke="#666"/><path d="M1 2h16v3H1z" fill="#77737a"/><circle cx="12" cy="12" r="3" fill="#fff" stroke="#444" stroke-width="1.500"/><path d="M12 7.500v1.500M12 15v1.500M7.500 12H9M15 12h1.500M9 9l1 1M14 14l1 1M15 9l-1 1M10 14l-1 1" stroke="#444" stroke-width="1.300"/><circle cx="12" cy="12" r="1" fill="#444"/></svg></button>
  <span class="zoom-value">100%</span>
  <button aria-label="Zoom out"><svg width="16" height="16"><path d="M3 8.500h10" stroke="#666"/></svg></button>
  <input class="zoom-range" type="range" min="0" max="100" value="25" aria-label="Zoom">
  <button aria-label="Zoom in"><svg width="16" height="16"><path d="M3 8.500h9M7.500 4v9" stroke="#666"/></svg></button>
  <button class="fit-btn" aria-label="Fit"><svg width="16" height="16" fill="#666"><path d="M8 0l4 4.500H4zM8 16l4-4.500H4zM0 8l4.500-4v8zM16 8l-4.500-4v8z"/><path d="M6.500 6.500h3v3h-3z"/></svg></button>
  <button class="bell-btn" aria-label="Notifications"><svg width="16" height="16"><path d="M8 1q4.500 0 4.500 5 0 4 2.500 6H1q2.500-2 2.500-6Q3.500 1 8 1zM5.500 13h5q-1 2.500-2.500 2.500T5.500 13z" fill="#3c3c3c"/></svg></button>
  <svg width="14" height="16" class="me-1 align-self-end" fill="#a4a4a6"><path d="M8 3h2v2H8zM8 7h2v2H8zM4 7h2v2H4zM8 11h2v2H8zM4 11h2v2H4zM0 11h2v2H0z"/></svg>
</footer>
</div>
<script src="https://cdn.jsdelivr.net/npm/bootstrap@5.3.0/dist/js/bootstrap.bundle.min.js"></script>
</body>
</html>
